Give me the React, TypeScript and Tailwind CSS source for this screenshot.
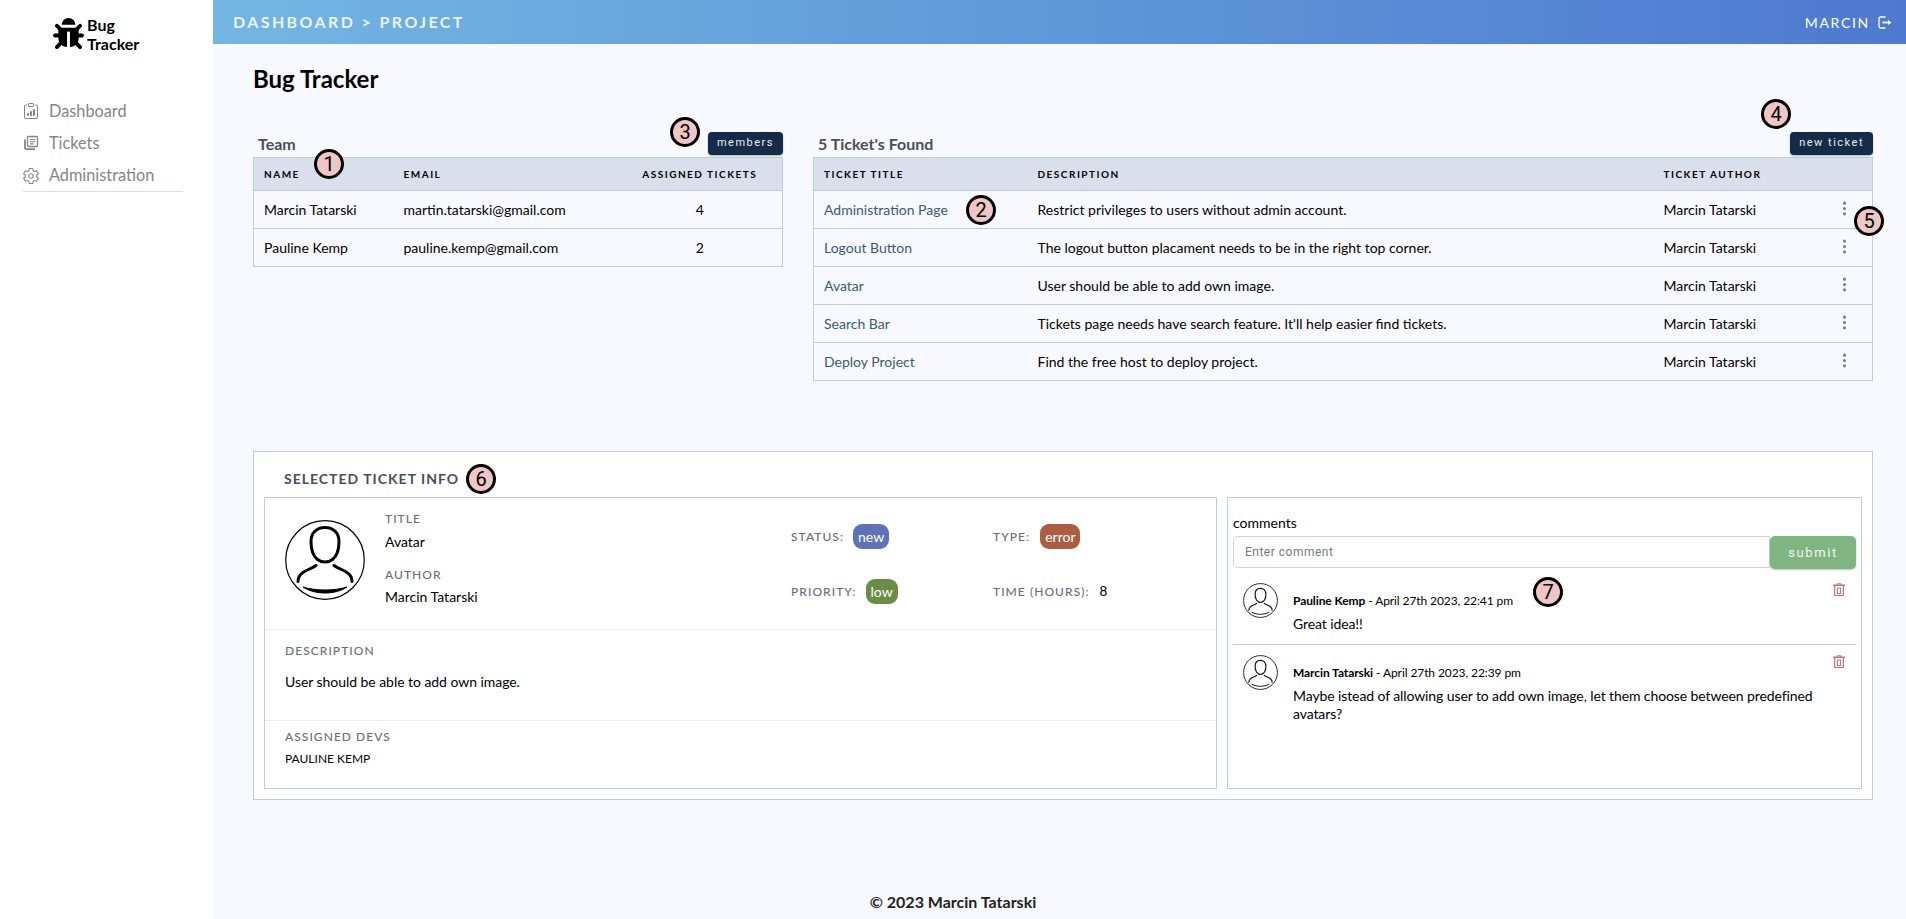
import { FaBug } from 'react-icons/fa';
import { BsClipboardData, BsThreeDotsVertical } from 'react-icons/bs';
import { IoSettingsOutline } from 'react-icons/io5';

const team = [
  { name: 'Marcin Tatarski', email: 'martin.tatarski@gmail.com', tickets: 4 },
  { name: 'Pauline Kemp', email: 'pauline.kemp@gmail.com', tickets: 2 },
];

const tickets = [
  { title: 'Administration Page', description: 'Restrict privileges to users without admin account.' },
  { title: 'Logout Button', description: 'The logout button placament needs to be in the right top corner.' },
  { title: 'Avatar', description: 'User should be able to add own image.' },
  { title: 'Search Bar', description: "Tickets page needs have search feature. It'll help easier find tickets." },
  { title: 'Deploy Project', description: 'Find the free host to deploy project.' },
];

const comments = [
  { author: 'Pauline Kemp', date: 'April 27th 2023, 22:41 pm', text: 'Great idea!!' },
  {
    author: 'Marcin Tatarski',
    date: 'April 27th 2023, 22:39 pm',
    text: 'Maybe istead of allowing user to add own image, let them choose between predefined avatars?',
  },
];

const markers = [
  { n: 1, className: 'left-[314px] top-[149px]' },
  { n: 2, className: 'left-[966px] top-[195px]' },
  { n: 3, className: 'left-[670px] top-[117px]' },
  { n: 4, className: 'left-[1761px] top-[99px]' },
  { n: 5, className: 'left-[1854px] top-[206px]' },
  { n: 6, className: 'left-[466px] top-[464px]' },
  { n: 7, className: 'left-[1533px] top-[577px]' },
];

function Avatar({ className }: { className: string }) {
  return (
    <svg viewBox="0 0 80 80" className={className} fill="none" stroke="black">
      <circle cx="40" cy="40" r="39.3" strokeWidth="1.2" />
      <path d="M40 7.500c-8.500 0-14 5.500-14 14 0 8 2 14.500 6.500 18 2.200 1.700 4.700 2.500 7.500 2.500s5.300-.8 7.500-2.500c4.500-3.500 6.500-10 6.500-18 0-8.500-5.500-14-14-14z" strokeWidth="3" />
      <path d="M31 45.500c-4 3-9 4-13 7-3 2-5 5-5 9M49 45.500c4 3 9 4 13 7 3 2 5 5 5 9" strokeWidth="3" strokeLinecap="round" />
      <path d="M18 67c6 4 14 6 22 6s16-2 22-6c-6 2-14 3-22 3s-16-1-22-3z" fill="black" strokeWidth="1" />
    </svg>
  );
}

function SmallAvatar() {
  return (
    <svg viewBox="0 0 36 36" className="w-[35px] h-[35px] shrink-0" fill="none" stroke="#111">
      <circle cx="18" cy="18" r="17.400" strokeWidth="0.9" />
      <path d="M18 5.500c-3.500 0-5.500 2.500-5.500 6 0 3 1 6 2.800 7.500.8.700 1.700 1 2.700 1s1.900-.3 2.700-1c1.800-1.500 2.800-4.500 2.800-7.500 0-3.500-2-6-5.500-6z" strokeWidth="1.200" />
      <path d="M14 21c-2 1.500-4 1.800-6 3.200-1.300 1-2 2.200-2 3.800M22 21c2 1.500 4 1.800 6 3.200 1.300 1 2 2.200 2 3.800" strokeWidth="1.200" strokeLinecap="round" />
      <path d="M9 30c3 1.500 6 2.200 9 2.200s6-.7 9-2.200" strokeWidth="1" />
    </svg>
  );
}

// stacked documents, nav "Tickets"
function TicketsIcon() {
  return (
    <svg viewBox="0 0 16 16" className="w-[16px] h-[16px]" fill="none" stroke="currentColor" strokeWidth="1.300">
      <rect x="4.500" y="1.500" width="10" height="10" rx="1" />
      <path d="M2 4.500v8.500a1.200 1.200 0 0 0 1.200 1.200h8.800" strokeWidth="1.800" />
      <path d="M7 4.500h5M7 6.700h5M7 8.900h3.500" strokeWidth="1.100" />
    </svg>
  );
}

function LogoutIcon() {
  return (
    <svg viewBox="0 0 14 13" className="w-[14px] h-[13px]" fill="none" stroke="currentColor" strokeWidth="1.300">
      <path d="M7.500 1H2.500A1.500 1.500 0 0 0 1 2.500v8A1.500 1.500 0 0 0 2.500 12h5" />
      <path d="M4.500 6.500h7" strokeWidth="1.800" />
      <path d="M10 4l3.500 2.500L10 9z" fill="currentColor" stroke="none" />
    </svg>
  );
}

function TrashIcon({ className }: { className: string }) {
  return (
    <svg viewBox="0 0 12 13" className={className} fill="none" stroke="currentColor">
      <path d="M0 2.200h12" strokeWidth="1.300" />
      <path d="M4 2V.8h4V2" strokeWidth="1" />
      <rect x="1.700" y="2.500" width="8.600" height="10" rx="0.600" strokeWidth="1.200" />
      <rect x="4.400" y="5" width="3.200" height="5.500" strokeWidth="1" />
    </svg>
  );
}

function Label({ children }: { children: React.ReactNode }) {
  return <span className="text-[12px] leading-[16px] tracking-[1.05px] text-[#6a6e75] font-medium">{children}</span>;
}

function Pill({ color, children }: { color: string; children: React.ReactNode }) {
  return <span className={`${color} h-[25px] px-[5px] rounded-[9px] inline-flex items-center text-white text-[14px]`}>{children}</span>;
}

function SmallButton({ children }: { children: React.ReactNode }) {
  return (
    <button className="h-[23px] bg-[#142c48] rounded-[4px] px-[9px] text-[#e8eef4] text-[11px] tracking-[1.5px] font-['Roboto',sans-serif] shadow-[0_1px_2px_rgba(0,0,0,0.3)]">
      {children}
    </button>
  );
}

export default function App() {
  return (
    <div className="h-screen flex overflow-hidden relative font-['Lato',sans-serif] bg-[#f8f9fe] text-black">
      {/* Sidebar */}
      <aside className="w-[213px] shrink-0 bg-white pl-[23px] pr-[30px]">
        <div className="flex items-start gap-[3px] pl-[30px] pt-[17px] h-[95px]">
          <FaBug className="w-[31px] h-[31px] mt-[1px]" />
          <div className="text-[16px] leading-[19px] font-bold -mt-[2px]">
            Bug
            <br />
            Tracker
          </div>
        </div>
        <nav className="border-b border-[#d6deea] text-[16.3px] text-[#858585]">
          <div className="h-[32px] flex items-center gap-[10px]">
            <BsClipboardData className="w-[16px] h-[16px]" />
            Dashboard
          </div>
          <div className="h-[32px] flex items-center gap-[10px]">
            <TicketsIcon />
            Tickets
          </div>
          <div className="h-[32px] pt-[1px] flex items-center gap-[10px]">
            <IoSettingsOutline className="w-[18px] h-[18px] -mx-[1px]" />
            Administration
          </div>
        </nav>
      </aside>

      <div className="flex-1 flex flex-col min-w-0">
        {/* Top bar */}
        <header className="h-[44px] shrink-0 bg-gradient-to-r from-[#73b6e2] to-[#4e79cf] flex items-center justify-between pl-[20px] pr-[14px] text-white">
          <span className="text-[16px] font-bold tracking-[2.4px] text-[#eaf3fa]">DASHBOARD &gt; PROJECT</span>
          <span className="flex items-center gap-[8px] text-[14px] tracking-[1.7px]">
            MARCIN
            <LogoutIcon />
          </span>
        </header>

        <main className="flex-1 pl-[40px] pr-[33px]">
          <h1 className="text-[24px] leading-[30px] font-bold mt-[20px]">Bug Tracker</h1>

          <div className="flex gap-[30px] items-start mt-[26px]">
            {/* Team */}
            <section className="w-[530px]">
              <div className="flex justify-between items-end h-[37px]">
                <h2 className="pl-[5px] text-[16px] leading-[20px] font-bold text-[#4b4f57] mb-[3px]">Team</h2>
                <div className="self-start mt-[8px]">
                  <SmallButton>members</SmallButton>
                </div>
              </div>
              <table className="w-full table-fixed border-collapse border border-[#bccde0] text-[14px]">
                <thead>
                  <tr className="h-[33px] bg-[#d9e0eb] border-b border-[#bccde0] text-[10px] tracking-[1.5px] font-bold">
                    <th className="w-[140px] pl-[10px] text-left">NAME</th>
                    <th className="w-[224px] pl-[10px] text-left">EMAIL</th>
                    <th className="text-center">ASSIGNED TICKETS</th>
                  </tr>
                </thead>
                <tbody>
                  {team.map((m) => (
                    <tr key={m.name} className="h-[38px] border-b border-[#bccde0]">
                      <td className="pl-[10px]">{m.name}</td>
                      <td className="pl-[10px]">{m.email}</td>
                      <td className="text-center">{m.tickets}</td>
                    </tr>
                  ))}
                </tbody>
              </table>
            </section>

            {/* Tickets */}
            <section className="w-[1060px]">
              <div className="flex justify-between items-end h-[37px]">
                <h2 className="pl-[5px] text-[16px] leading-[20px] font-bold text-[#4b4f57] mb-[3px]">5 Ticket's Found</h2>
                <div className="self-start mt-[8px]">
                  <SmallButton>new ticket</SmallButton>
                </div>
              </div>
              <table className="w-full table-fixed border-collapse border border-[#bccde0] text-[14px]">
                <thead>
                  <tr className="h-[33px] bg-[#d9e0eb] border-b border-[#bccde0] text-[10px] tracking-[1.5px] font-bold">
                    <th className="w-[214px] pl-[10px] text-left">TICKET TITLE</th>
                    <th className="w-[626px] pl-[10px] text-left">DESCRIPTION</th>
                    <th className="pl-[10px] text-left">TICKET AUTHOR</th>
                    <th className="w-[56px]"></th>
                  </tr>
                </thead>
                <tbody>
                  {tickets.map((t) => (
                    <tr key={t.title} className="h-[38px] border-b border-[#bccde0]">
                      <td className="pl-[10px] text-[#3d5878]">{t.title}</td>
                      <td className="pl-[10px]">{t.description}</td>
                      <td className="pl-[10px]">Marcin Tatarski</td>
                      <td>
                        <BsThreeDotsVertical className="w-[17px] h-[17px] text-[#808080] ml-[19px] -mt-[3px]" />
                      </td>
                    </tr>
                  ))}
                </tbody>
              </table>
            </section>
          </div>

          {/* Selected ticket */}
          <section className="mt-[70px] h-[349px] bg-white border border-[#bccde0] px-[10px] pb-[10px] flex flex-col">
            <h3 className="h-[45px] shrink-0 pl-[20px] pt-[17px] text-[14px] leading-[20px] font-bold tracking-[1px] text-[#4b4f57]">SELECTED TICKET INFO</h3>
            <div className="flex-1 flex gap-[10px] min-h-0">
              <div className="w-[953px] border border-[#bccde0] flex flex-col">
                <div className="h-[132px] flex border-b border-[#e9edf1] shrink-0">
                  <Avatar className="w-[80px] h-[80px] ml-[20px] mt-[22px] shrink-0" />
                  <div className="w-[426px] pl-[20px] pt-[13px] flex flex-col shrink-0">
                    <Label>TITLE</Label>
                    <span className="text-[14px] leading-[18px] mt-[6px]">Avatar</span>
                    <span className="mt-[10px]"><Label>AUTHOR</Label></span>
                    <span className="text-[14px] leading-[18px] mt-[3px]">Marcin Tatarski</span>
                  </div>
                  <div className="w-[202px] flex flex-col pt-[26px] shrink-0">
                    <div className="flex items-center gap-[9px] h-[25px]">
                      <Label>STATUS:</Label>
                      <Pill color="bg-[#5f72b7]">new</Pill>
                    </div>
                    <div className="flex items-center gap-[9px] h-[25px] mt-[30px]">
                      <Label>PRIORITY:</Label>
                      <Pill color="bg-[#6b8c44]">low</Pill>
                    </div>
                  </div>
                  <div className="flex flex-col pt-[26px]">
                    <div className="flex items-center gap-[10px] h-[25px]">
                      <Label>TYPE:</Label>
                      <Pill color="bg-[#ae5c41]">error</Pill>
                    </div>
                    <div className="flex items-center gap-[10px] h-[25px] mt-[30px]">
                      <Label>TIME (HOURS):</Label>
                      <span className="text-[14px] font-['Liberation_Sans',sans-serif]">8</span>
                    </div>
                  </div>
                </div>
                <div className="h-[91px] border-b border-[#e9edf1] pl-[20px] pt-[7px] shrink-0">
                  <Label>DESCRIPTION</Label>
                  <p className="text-[14px] leading-[18px] tracking-[-0.05px] mt-[12px]">User should be able to add own image.</p>
                </div>
                <div className="pl-[20px] pt-[2px]">
                  <Label>ASSIGNED DEVS</Label>
                  <p className="text-[12px] leading-[16px] mt-[4px]">PAULINE KEMP</p>
                </div>
              </div>

              <div className="flex-1 border border-[#bccde0] px-[5px] pt-[16px]">
                <div className="text-[14px] leading-[18px]">comments</div>
                <div className="flex mt-[4px]">
                  <input
                    readOnly
                    placeholder="Enter comment"
                    className="flex-1 min-w-0 h-[32px] bg-white border border-[#ced4da] rounded-l-[5px] px-[11px] text-[12px] tracking-[0.5px] font-['Roboto',sans-serif] placeholder:text-[#757a80] outline-none"
                  />
                  <button className="w-[86px] h-[33px] bg-[#7eb580] rounded-[5px] text-[#f2f7f2] text-[13px] tracking-[1.6px] font-['Roboto',sans-serif] shadow-[0_1px_2px_rgba(0,0,0,0.25)]">
                    submit
                  </button>
                </div>
                {comments.map((c, i) => (
                  <div key={c.author} className={`relative flex gap-[15px] pl-[10px] ${i === 0 ? 'pt-[14px] h-[76px] border-b border-[#bccde0]' : 'pt-[10px]'}`}>
                    <SmallAvatar />
                    <div className="pt-[10px] pr-[30px]">
                      <div className="text-[12px] leading-[16px] tracking-[-0.09px]">
                        <b>{c.author}</b> - {c.date}
                      </div>
                      <p className="text-[14px] leading-[18px] tracking-[-0.1px] mt-[6px]">{c.text}</p>
                    </div>
                    <TrashIcon className={`absolute right-[11px] w-[12px] h-[13px] text-[#b87373] ${i === 0 ? 'top-[14px]' : 'top-[10px]'}`} />
                  </div>
                ))}
              </div>
            </div>
          </section>
        </main>

        <footer className="h-[34px] shrink-0 -ml-[213px] text-center text-[16px] leading-[34px] font-bold text-[#222]">© 2023 Marcin Tatarski</footer>
      </div>

      {/* Numbered callouts */}
      {markers.map((m) => (
        <div
          key={m.n}
          className={`absolute ${m.className} w-[30px] h-[30px] rounded-full bg-[#eec6c6] border-[3px] border-black flex items-center justify-center text-[20px] text-black font-['Roboto',sans-serif]`}
        >
          {m.n}
        </div>
      ))}
    </div>
  );
}
